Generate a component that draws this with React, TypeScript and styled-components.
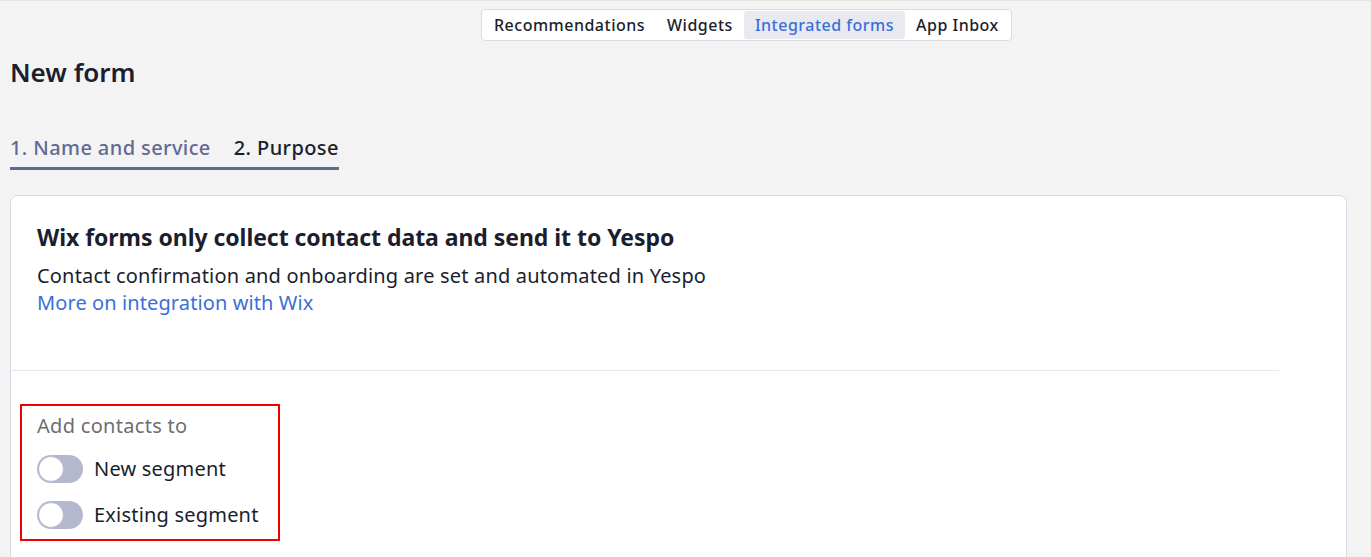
import React, { useState } from "react";
import styled, { createGlobalStyle } from "styled-components";

const GlobalStyle = createGlobalStyle`
  html, body {
    margin: 0;
    padding: 0;
    background: #f3f3f3;
    font-family: "Noto Sans", Inter, Arial, sans-serif;
    color: #1b1e2c;
  }
`;

const Page = styled.div`
  min-height: 557px;
  border-top: 1px solid #e4e4e4;
  padding: 0 24px 0 10px;
  overflow: hidden;
`;

const TopBar = styled.div`
  display: flex;
  padding-top: 8px;
  padding-left: 471px;
`;

const Segmented = styled.div`
  display: flex;
  padding: 1px;
  background: #fff;
  border: 1px solid #d9dce6;
  border-radius: 4px;
`;

const SegItem = styled.button<{ $active?: boolean }>`
  border: 0;
  font-family: inherit;
  font-size: 16px;
  font-weight: 500;
  letter-spacing: 0.5px;
  height: 28px;
  padding: 0 11px;
  border-radius: 3px;
  cursor: pointer;
  color: ${(p) => (p.$active ? "#3a6fd8" : "#1b1e2c")};
  background: ${(p) => (p.$active ? "#e8eaf0" : "transparent")};
`;

const Title = styled.h1`
  margin: 15px 0 0;
  font-size: 26px;
  line-height: 32px;
  font-weight: 600;
`;

const Steps = styled.div`
  display: flex;
  margin-top: 45px;
`;

const Step = styled.div<{ $current?: boolean }>`
  font-size: 20px;
  font-weight: 500;
  letter-spacing: 0.4px;
  line-height: 30px;
  padding-right: ${(p) => (p.$current ? 0 : 23)}px;
  padding-bottom: 4px;
  color: ${(p) => (p.$current ? "#1b1e2c" : "#5f6a95")};
  border-bottom: 3px solid #5f6a95;
`;

const Card = styled.div`
  margin-top: 25px;
  background: #fff;
  border: 1px solid #d9dce8;
  border-radius: 8px;
  padding: 27px 0 40px;
  min-height: 360px;
`;

const Intro = styled.div`
  padding: 0 26px;
`;

const Heading = styled.h2`
  margin: 0;
  font-size: 23px;
  letter-spacing: -0.05px;
  line-height: 28px;
  font-weight: 700;
`;

const Text = styled.p`
  margin: 11px 0 0;
  font-size: 20px;
  letter-spacing: 0.18px;
  line-height: 27px;
`;

const Link = styled.a`
  display: block;
  font-size: 20px;
  letter-spacing: 0.1px;
  line-height: 27px;
  color: #3a6fd8;
  text-decoration: none;
`;

const Divider = styled.hr`
  margin: 54px 67px 0 0;
  border: 0;
  border-top: 1px solid #e6e8ee;
`;

const Section = styled.div`
  display: inline-flex;
  flex-direction: column;
  margin: 33px 0 0 9px;
  padding: 8px 19px 9px 15px;
  border: 2px solid #f20000;
`;

const Label = styled.div`
  font-size: 20px;
  letter-spacing: 0.3px;
  line-height: 24px;
  color: #6e6e6e;
`;

const Row = styled.label`
  display: flex;
  align-items: center;
  gap: 11px;
  margin-top: 16px;
  font-size: 20px;
  letter-spacing: 0.2px;
  line-height: 30px;
  cursor: pointer;
  & + & {
    margin-top: 16px;
  }
`;

const Track = styled.span<{ $on: boolean }>`
  position: relative;
  width: 46px;
  height: 28px;
  border-radius: 14px;
  background: ${(p) => (p.$on ? "#3a6fd8" : "#b3b8cf")};
  flex-shrink: 0;
`;

const Knob = styled.span<{ $on: boolean }>`
  position: absolute;
  top: 1px;
  left: ${(p) => (p.$on ? 19 : 1)}px;
  width: 26px;
  height: 26px;
  border-radius: 50%;
  background: #fff;
  box-sizing: border-box;
  border: 1px solid #b3b8cf;
`;

function Toggle({ label }: { label: string }) {
  const [on, setOn] = useState(false);
  return (
    <Row onClick={() => setOn(!on)}>
      <Track $on={on}>
        <Knob $on={on} />
      </Track>
      {label}
    </Row>
  );
}

export default function App() {
  const [tab, setTab] = useState("Integrated forms");
  const tabs = ["Recommendations", "Widgets", "Integrated forms", "App Inbox"];

  return (
    <>
      <GlobalStyle />
      <Page>
        <TopBar>
          <Segmented>
            {tabs.map((t) => (
              <SegItem key={t} $active={t === tab} onClick={() => setTab(t)}>
                {t}
              </SegItem>
            ))}
          </Segmented>
        </TopBar>
        <Title>New form</Title>
        <Steps>
          <Step>1. Name and service</Step>
          <Step $current>2. Purpose</Step>
        </Steps>
        <Card>
          <Intro>
            <Heading>Wix forms only collect contact data and send it to Yespo</Heading>
            <Text>Contact confirmation and onboarding are set and automated in Yespo</Text>
            <Link href="#">More on integration with Wix</Link>
          </Intro>
          <Divider />
          <Section>
            <Label>Add contacts to</Label>
            <Toggle label="New segment" />
            <Toggle label="Existing segment" />
          </Section>
        </Card>
      </Page>
    </>
  );
}
